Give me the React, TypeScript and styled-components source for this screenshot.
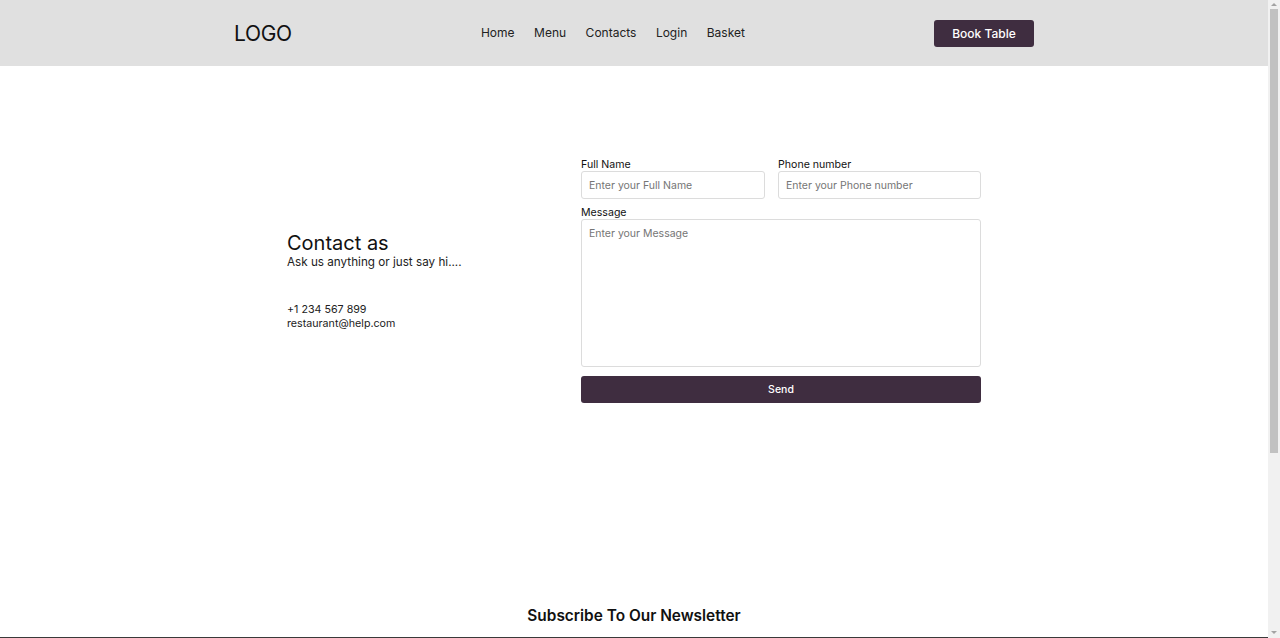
import React from 'react'
import styled, { createGlobalStyle } from 'styled-components'

const GlobalStyle = createGlobalStyle`
  * { box-sizing: border-box; }
  body {
    margin: 0;
    padding-right: 12px;
    font-family: Inter, "Noto Sans", sans-serif;
    color: #111;
    background: #fff;
  }
`

const navItems = ['Home', 'Menu', 'Contacts', 'Login', 'Basket']

function App() {
  return (
    <>
      <GlobalStyle />
      <Header>
        <HeaderInner>
          <Logo>LOGO</Logo>
          <Nav>
            {navItems.map((item) => (
              <NavLink key={item} href="#">
                {item}
              </NavLink>
            ))}
          </Nav>
          <BookButton>Book Table</BookButton>
        </HeaderInner>
      </Header>

      <ContactSection>
        <ContactInner>
          <ContactInfo>
            <Title>Contact as</Title>
            <Subtitle>Ask us anything or just say hi....</Subtitle>
            <Details>
              <span>+1 234 567 899</span>
              <span>restaurant@help.com</span>
            </Details>
          </ContactInfo>

          <Form onSubmit={(e) => e.preventDefault()}>
            <FieldRow>
              <Field>
                <Label>Full Name</Label>
                <Input placeholder="Enter your Full Name" />
              </Field>
              <Field>
                <Label>Phone number</Label>
                <Input placeholder="Enter your Phone number" />
              </Field>
            </FieldRow>
            <Field>
              <Label>Message</Label>
              <TextArea placeholder="Enter your Message" />
            </Field>
            <SendButton type="submit">Send</SendButton>
          </Form>
        </ContactInner>
      </ContactSection>

      <Newsletter>
        <NewsletterTitle>Subscribe To Our Newsletter</NewsletterTitle>
      </Newsletter>
      <Footer />

      {/* page scrollbar, as in the screenshot */}
      <ScrollTrack>
        <ScrollArrow $up />
        <ScrollThumb />
        <ScrollArrow />
      </ScrollTrack>
    </>
  )
}

export default App

const Header = styled.header`
  background: #e0e0e0;
  height: 66px;
`

const HeaderInner = styled.div`
  max-width: 800px;
  height: 100%;
  margin: 0 auto;
  display: flex;
  align-items: center;
  justify-content: space-between;
`

const Logo = styled.div`
  font-size: 21px;
  font-weight: 400;
  color: #111;
  letter-spacing: -0.3px;
`

const Nav = styled.nav`
  display: flex;
  gap: 19.5px;
  margin-top: -1px;
`

const NavLink = styled.a`
  font-size: 12px;
  color: #222;
  text-decoration: none;
`

const BookButton = styled.button`
  width: 100px;
  height: 27px;
  border: none;
  border-radius: 3px;
  background: #3f2d40;
  color: #fff;
  font-family: inherit;
  font-size: 12px;
  font-weight: 500;
  cursor: pointer;
`

const ContactSection = styled.section`
  padding: 92px 0 203px;
`

const ContactInner = styled.div`
  width: 694px;
  margin: 0 auto;
  display: flex;
  align-items: center;
  justify-content: space-between;
`

const ContactInfo = styled.div`
  display: flex;
  flex-direction: column;
`

const Title = styled.h2`
  margin: 0;
  font-size: 20px;
  font-weight: 400;
  line-height: 24px;
  color: #111;
`

const Subtitle = styled.p`
  margin: 0;
  font-size: 11.7px;
  line-height: 15px;
  color: #222;
`

const Details = styled.div`
  margin-top: 33px;
  display: flex;
  flex-direction: column;
  font-size: 10.7px;
  line-height: 14px;
  color: #222;
`

const Form = styled.form`
  width: 400px;
  display: flex;
  flex-direction: column;
`

const FieldRow = styled.div`
  display: grid;
  grid-template-columns: 184px 203px;
  column-gap: 13px;
`

const Field = styled.div`
  display: flex;
  flex-direction: column;
  margin-bottom: 7px;
`

const Label = styled.label`
  font-size: 10.6px;
  line-height: 13px;
  color: #111;
`

const Input = styled.input`
  height: 28px;
  border: 1px solid #dcdcdc;
  border-radius: 3px;
  padding: 0 7px;
  font-family: inherit;
  font-size: 10.5px;
  color: #222;
  outline: none;

  &::placeholder {
    color: #757575;
  }
`

const TextArea = styled.textarea`
  height: 148px;
  border: 1px solid #dcdcdc;
  border-radius: 3px;
  padding: 7px 7px;
  font-family: inherit;
  font-size: 10.5px;
  resize: none;
  outline: none;

  &::placeholder {
    color: #757575;
  }
`

const SendButton = styled.button`
  margin-top: 2px;
  height: 27px;
  border: none;
  border-radius: 3px;
  background: #3f2d40;
  color: #fff;
  font-family: inherit;
  font-size: 10.5px;
  font-weight: 500;
  cursor: pointer;
`

const Newsletter = styled.section`
  display: flex;
  justify-content: center;
  padding-bottom: 11px;
`

const NewsletterTitle = styled.h3`
  margin: 0;
  font-size: 15.4px;
  font-weight: 600;
  line-height: 20px;
  color: #111;
`

const Footer = styled.footer`
  height: 240px;
  background: #3a3a3a;
`

const ScrollTrack = styled.div`
  position: fixed;
  top: 0;
  right: 0;
  width: 12px;
  height: 100vh;
  background: #f1f1f1;
  display: flex;
  flex-direction: column;
  align-items: center;
`

const ScrollThumb = styled.div`
  width: 8px;
  height: 444px;
  background: #c1c1c1;
`

const ScrollArrow = styled.div<{ $up?: boolean }>`
  width: 0;
  height: 0;
  margin: ${(p) => (p.$up ? '3px 0 3px' : 'auto 0 4px')};
  border-left: 3px solid transparent;
  border-right: 3px solid transparent;
  ${(p) =>
    p.$up ? 'border-bottom: 3px solid #a3a3a3;' : 'border-top: 3px solid #a3a3a3;'}
`
